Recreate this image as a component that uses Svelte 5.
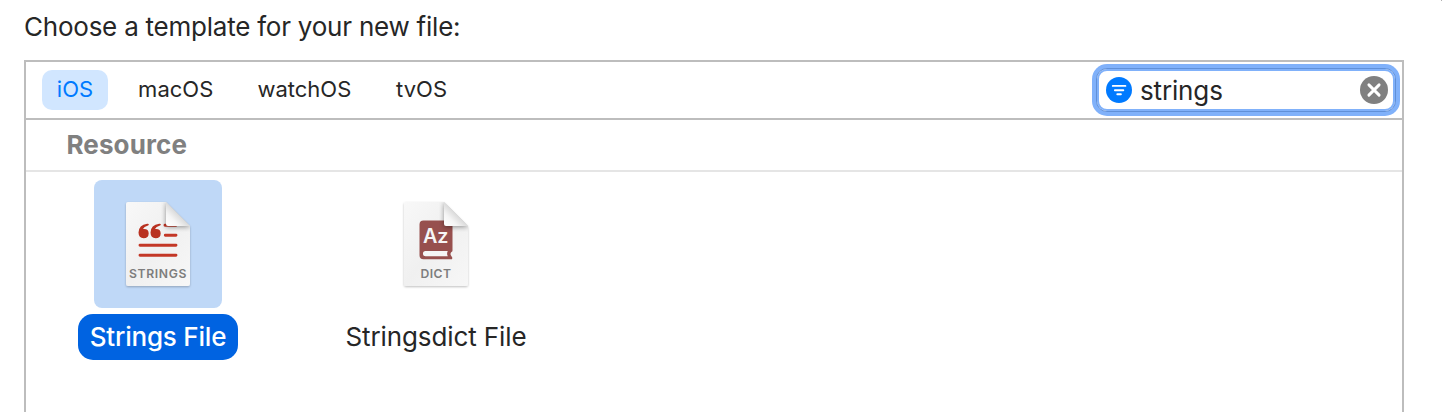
<script>
  const tabs = [
    { name: 'iOS', width: 66 },
    { name: 'macOS', width: 103 },
    { name: 'watchOS', width: 122 },
    { name: 'tvOS', width: 80 }
  ];
  const files = [
    { name: 'Strings File', kind: 'STRINGS', selected: true },
    { name: 'Stringsdict File', kind: 'DICT', selected: false }
  ];
</script>

<main>
  <i class="edge"></i>
  <h1>Choose a template for your new file:</h1>
  <section class="panel">
    <header>
      <nav>
        {#each tabs as tab, i}
          <button class:active={i === 0} style:width="{tab.width}px">{tab.name}</button>
        {/each}
      </nav>
      <div class="search">
        <div class="field">
          <svg class="filter" width="26" height="26" viewBox="0 0 26 26">
            <circle cx="13" cy="13" r="13" fill="#007aff" />
            <path d="M6.8 8.9h12.6M8.9 13.2h8.4M11.3 17.3h3.6" stroke="#fff" stroke-width="1.9" stroke-linecap="round" />
          </svg>
          <span class="query">strings</span>
          <svg class="clear" width="28" height="28" viewBox="0 0 28 28">
            <circle cx="14" cy="14" r="14" fill="#808080" />
            <path d="M8.9 8.9l10.2 10.2M19.1 8.9L8.9 19.1" stroke="#fff" stroke-width="2.9" stroke-linecap="round" />
          </svg>
        </div>
      </div>
    </header>
    <h2>Resource</h2>
    <div class="grid">
      {#each files as file}
        <div class="item" class:selected={file.selected}>
          <svg class="tile" width="128" height="128" viewBox="0 0 128 128">
            <defs>
              <linearGradient id="page-{file.kind}" x1="0" y1="0" x2="1" y2="1">
                <stop offset="0" stop-color="#f8f8f8" />
                <stop offset=".5" stop-color="#f0f0f0" />
                <stop offset="1" stop-color="#f7f7f7" />
              </linearGradient>
              <linearGradient id="fold-{file.kind}" x1="0" y1="1" x2=".55" y2=".45">
                <stop offset="0" stop-color="#fff" />
                <stop offset=".5" stop-color="#f5f5f5" />
                <stop offset="1" stop-color="#d4d4d4" />
              </linearGradient>
              <clipPath id="clip-{file.kind}">
                <path d="M34 22H72L96 46V104Q96 106 94 106H34Q32 106 32 104V24Q32 22 34 22Z" />
              </clipPath>
              <filter id="soft-{file.kind}" x="-50%" y="-50%" width="200%" height="200%">
                <feGaussianBlur stdDeviation="2.6" />
              </filter>
              <filter id="drop-{file.kind}" x="-20%" y="-20%" width="140%" height="140%">
                <feDropShadow dx="0" dy="1" stdDeviation="1.3" flood-color="#000" flood-opacity=".25" />
              </filter>
            </defs>
            <path
              d="M34 22H72L96 46V104Q96 106 94 106H34Q32 106 32 104V24Q32 22 34 22Z"
              fill="url(#page-{file.kind})"
              filter="url(#drop-{file.kind})"
            />
            <g clip-path="url(#clip-{file.kind})">
              {#if file.kind === 'STRINGS'}
                <g fill="#b93221">
                  {#each [0, 12] as shift}
                    <path transform="translate({shift} 0)" d="M53.2 43.7Q55 43.5 54.8 44.8Q54.7 45.5 53.5 45.8Q50.1 46.7 49 49Q54.6 48.4 54.7 53.4Q54.5 58.1 49.7 58.2Q44.6 58 44.5 52.4Q44.7 45 53.2 43.7Z" />
                  {/each}
                </g>
                <path d="M71 45.2H82M71.3 55.2H82M46 65.2H82M46 75.3H82" stroke="#c33726" stroke-width="2.9" stroke-linecap="round" />
              {:else}
                <path fill="#97504e" d="M51.5 40.5H80.5V70.5Q80.5 71.6 79.4 72Q77.6 74 79.4 76.2Q80.8 77.4 80 79.2H51.5Q47.5 79.2 47.5 75.2V44.5Q47.5 40.5 51.5 40.5Z" />
                <path fill="#f5f5f5" d="M53.5 71.1H75.8Q74.4 73.7 75.8 76.2H53.5A2.55 2.55 0 0 1 53.5 71.1Z" />
                <text class="az" x="63.7" y="63.2" text-anchor="middle">Az</text>
              {/if}
              <path d="M72 22L97 47H72Z" fill="#000" opacity=".42" filter="url(#soft-{file.kind})" />
            </g>
            <path d="M72 22L96 46H74Q72 46 72 44Z" fill="url(#fold-{file.kind})" />
            <text class="kind" x="64" y="98" text-anchor="middle" letter-spacing={file.kind === 'DICT' ? 0.45 : 0.65}>{file.kind}</text>
          </svg>
          <div class="label">{file.name}</div>
        </div>
      {/each}
    </div>
  </section>
</main>

<style>
  :global(body) { background: #fff; }
  main {
    position: relative;
    box-sizing: border-box;
    height: 412px;
    overflow: hidden;
    padding: 0 38px 0 24px;
    display: flex;
    flex-direction: column;
    font-family: Inter, sans-serif;
    color: #262626;
  }
  .edge {
    position: absolute;
    top: 0;
    right: 0;
    width: 1px;
    height: 1px;
    background: #b0b0b0;
  }
  h1 {
    flex: none;
    height: 60px;
    margin: 0;
    font-size: 26px;
    font-weight: 400;
    line-height: 54px;
    letter-spacing: -0.23px;
    white-space: nowrap;
  }
  .panel {
    flex: 1;
    border: 2px solid #bdbdbd;
    border-bottom: 0;
  }
  header {
    height: 56px;
    display: flex;
    justify-content: space-between;
    align-items: center;
    padding: 0 2px 0 16px;
    border-bottom: 2px solid #bdbdbd;
  }
  nav { display: flex; gap: 16.2px; }
  button {
    height: 40px;
    padding: 0 0 2px;
    border: 0;
    border-radius: 10px;
    background: none;
    color: inherit;
    font: 400 22px/38px Inter, sans-serif;
    text-align: center;
  }
  button.active { background: #d1e6ff; color: #007aff; }
  .search {
    box-sizing: border-box;
    width: 308px;
    height: 52px;
    padding: 4px;
    border-radius: 15px;
    background: #80b1fa;
  }
  .field {
    box-sizing: border-box;
    height: 44px;
    display: flex;
    align-items: center;
    padding: 0 8px 0 7px;
    border: 1px solid #6090d8;
    border-radius: 11px;
    background: #fff;
    box-shadow: inset 0 0 0 2px #80b1fa;
    font-size: 26px;
  }
  .filter { margin-left: 2px; }
  .query { flex: 1; padding: 2px 0 0 8px; line-height: 40px; letter-spacing: -0.15px; }
  .clear { margin-right: -1px; }
  h2 {
    height: 50px;
    margin: 0;
    padding-left: 40.5px;
    border-bottom: 2px solid #e5e5e5;
    color: #808080;
    font-size: 26px;
    font-weight: 700;
    line-height: 50px;
    letter-spacing: 0.1px;
  }
  .grid {
    display: grid;
    grid-template-columns: 278px 278px;
    margin-left: -7px;
    padding-top: 8px;
  }
  .item { display: flex; flex-direction: column; align-items: center; gap: 6px; }
  .tile { display: block; border-radius: 8px; }
  .selected .tile { background: #bfd8f7; }
  .label {
    height: 46px;
    padding: 0 12px;
    border-radius: 15px;
    font-size: 26px;
    line-height: 46px;
    letter-spacing: -0.1px;
    white-space: nowrap;
  }
  .selected .label {
    background: #0063e1;
    color: #fff;
    font-weight: 500;
    letter-spacing: -0.2px;
  }
  .kind { font: 600 12.2px Inter, sans-serif; fill: #7d7d7d; }
  .az { font: 600 19.8px Inter, sans-serif; fill: #f5f5f5; }
</style>
